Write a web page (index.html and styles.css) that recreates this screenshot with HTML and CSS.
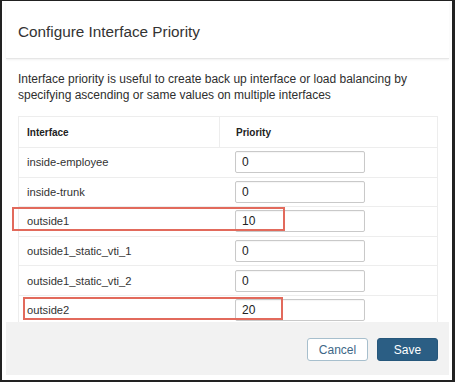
FILE: index.html
```html
<!DOCTYPE html>
<html lang="en">
<head>
  <meta charset="UTF-8" />
  <meta name="viewport" content="width=device-width, initial-scale=1.0"/>
  <title>Configure Interface Priority</title>
  <link rel="stylesheet" href="styles.css">
</head>
<body>

  <div class="modal">
    <div class="modal-head">
      <h2>Configure Interface Priority</h2>
    </div>

    <div class="modal-body">
      <p>Interface priority is useful to create back up interface or load balancing by specifying ascending or same values on multiple interfaces</p>

      <div class="grid">
        <div class="row head">
          <div class="c1">Interface</div>
          <div class="c2">Priority</div>
        </div>
        <div class="row">
          <div class="c1">inside-employee</div>
          <div class="c2"><input type="text" value="0" /></div>
        </div>
        <div class="row">
          <div class="c1">inside-trunk</div>
          <div class="c2"><input type="text" value="0" /></div>
        </div>
        <div class="row">
          <div class="c1">outside1</div>
          <div class="c2"><input type="text" value="10" /></div>
        </div>
        <div class="row">
          <div class="c1">outside1_static_vti_1</div>
          <div class="c2"><input type="text" value="0" /></div>
        </div>
        <div class="row">
          <div class="c1">outside1_static_vti_2</div>
          <div class="c2"><input type="text" value="0" /></div>
        </div>
        <div class="row">
          <div class="c1">outside2</div>
          <div class="c2"><input type="text" value="20" /></div>
        </div>
      </div>
    </div>

    <div class="modal-foot">
      <button class="btn-cancel">Cancel</button>
      <button class="btn-save">Save</button>
    </div>

    <!-- red callouts drawn over the screenshot -->
    <span class="mark mark-1"></span>
    <span class="mark mark-2"></span>
  </div>

</body>
</html>
```

FILE: styles.css
```css
* {
  margin: 0;
  padding: 0;
  box-sizing: border-box;
}

body {
  background: #222;
  font-family: 'Liberation Sans', Arial, sans-serif;
  color: #333;
  width: 455px;
  height: 382px;
  overflow: hidden;
  padding: 1px 0 0 2px;
}

.modal {
  position: relative;
  width: 450px;
  height: 379px;
  background: #fff;
  padding: 0 3px 5px 4px;
  display: flex;
  flex-direction: column;
}

.modal-head {
  height: 58px;
  padding: 21px 12px 0;
  border-bottom: 1px solid #e6e6e6;
  box-shadow: 0 1px 2px rgba(0,0,0,0.06);
  position: relative;
  z-index: 1;
}

.modal-head h2 {
  font-size: 15.3px;
  font-weight: normal;
  line-height: 20px;
  color: #333;
}

.modal-body {
  flex: 1;
  overflow: hidden;
  padding: 12px 11px 0 12px;
}

.modal-body p {
  font-size: 12px;
  line-height: 16px;
  color: #2e2e2e;
  margin-bottom: 13px;
}

.grid {
  border: 1px solid #ededed;
  border-bottom: none;
}

.row {
  display: flex;
  align-items: center;
  height: 29.6px;
  border-top: 1px solid #ededed;
  font-size: 11.2px;
  color: #333;
}

.row:first-child {
  border-top: none;
}

.row.head {
  height: 30px;
  font-size: 10px;
  font-weight: bold;
  color: #222;
}

.c1 {
  width: 201px;
  padding-left: 8px;
}

.c2 {
  flex: 1;
  padding-left: 15px;
}

.row.head .c1 {
  height: 100%;
  display: flex;
  align-items: center;
  border-right: 1px solid #ededed;
}

.row.head .c2 {
  padding-left: 16px;
}

.row input {
  width: 130px;
  height: 22px;
  border: 1px solid #c9c9c9;
  border-radius: 2px;
  padding: 0 6px;
  font-family: 'Liberation Sans', Arial, sans-serif;
  font-size: 12px;
  color: #222;
  background: #fff;
  box-shadow: inset 0 1px 1px rgba(0,0,0,0.04);
}

.modal-foot {
  height: 53px;
  background: #f2f2f2;
  display: flex;
  justify-content: flex-end;
  gap: 9px;
  padding: 16px 11px 0 0;
}

.modal-foot button {
  height: 23px;
  width: 61px;
  border-radius: 3px;
  font-family: 'Liberation Sans', Arial, sans-serif;
  font-size: 12px;
  cursor: pointer;
}

.btn-cancel {
  background: #fff;
  border: 1px solid #a7bfcd;
  color: #3d6787;
}

.btn-save {
  width: 60px;
  background: #2b5e84;
  border: 1px solid #26577b;
  color: #fff;
}

.mark {
  position: absolute;
  border: 2px solid #e26a5c;
  z-index: 2;
}

.mark-1 {
  left: 10px;
  top: 206px;
  width: 273px;
  height: 24px;
}

.mark-2 {
  left: 21px;
  top: 296px;
  width: 260px;
  height: 23px;
}
```
